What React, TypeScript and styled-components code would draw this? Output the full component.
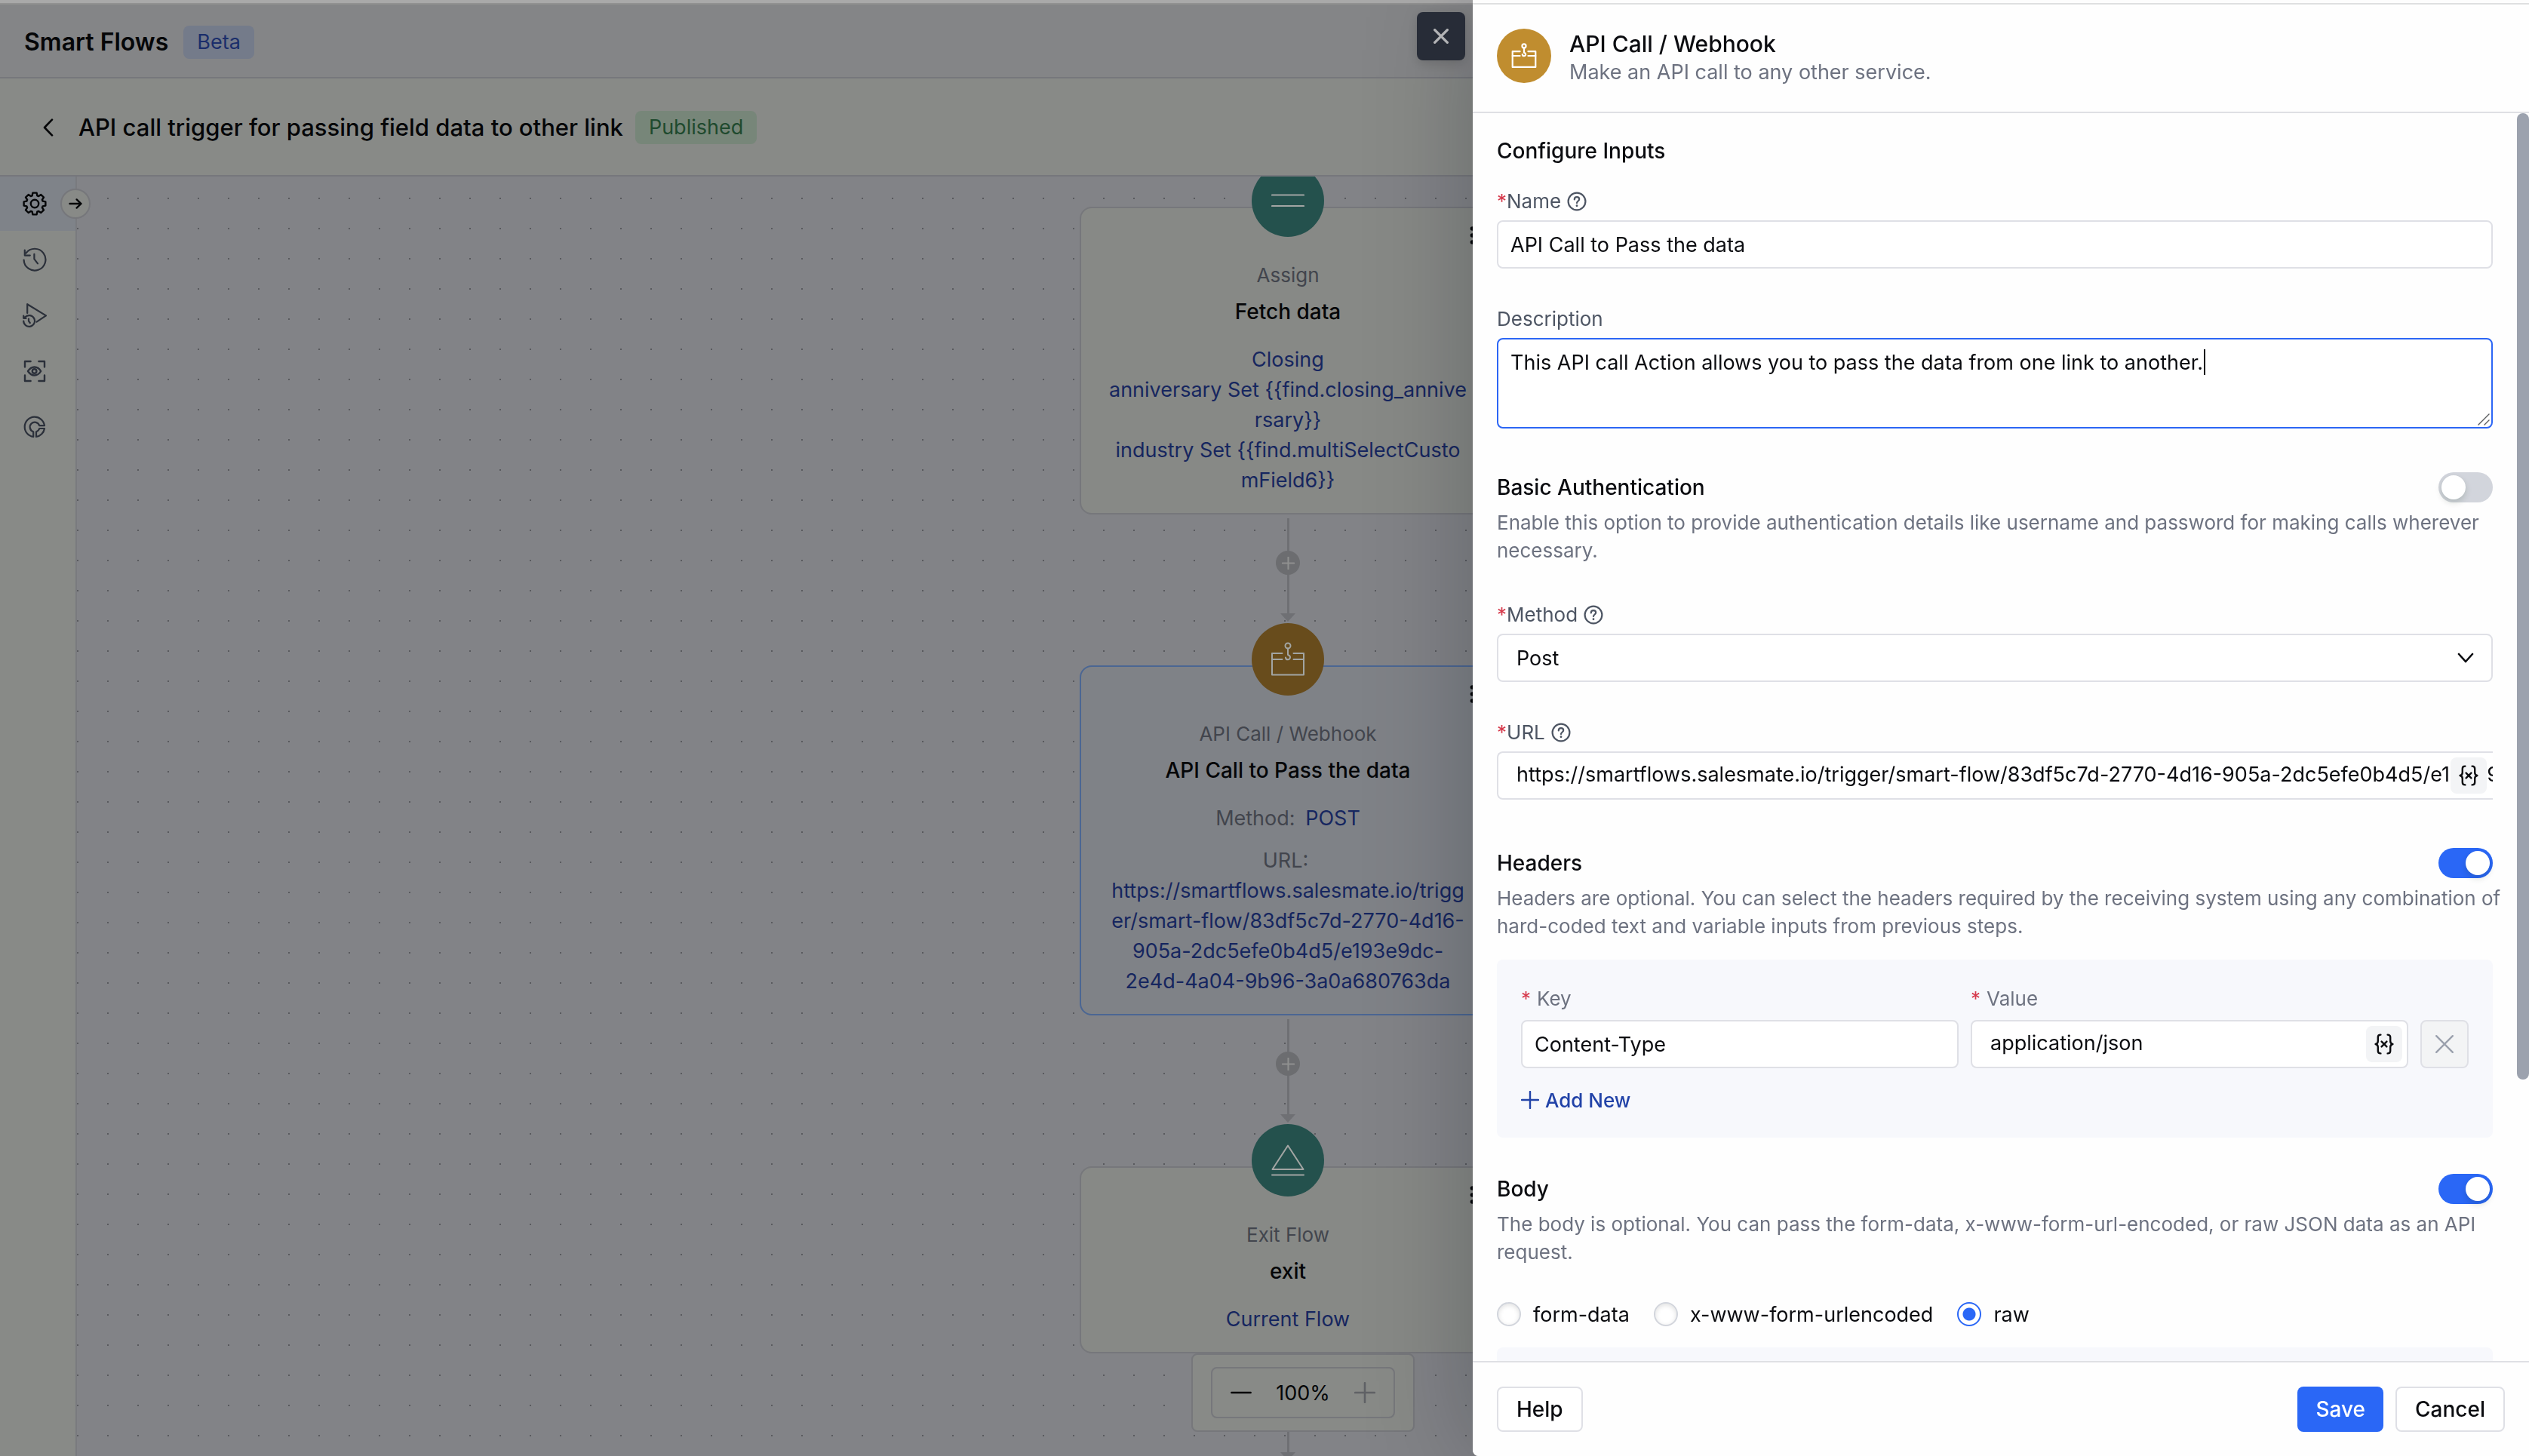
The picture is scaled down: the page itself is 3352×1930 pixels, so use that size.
import React, { useId, useState } from "react";
import styled, { createGlobalStyle, css } from "styled-components";

const font = `Inter, "Liberation Sans", sans-serif`;

const GlobalStyle = createGlobalStyle`
  *, *::before, *::after { box-sizing: border-box; }
  html, body, #root { height: 100%; }
  body {
    margin: 0;
    overflow: hidden;
    font-family: ${font};
    font-size: 26px;
    color: #0b0c10;
    background: #828387;
  }
  button, input, select, textarea { font: inherit; color: inherit; margin: 0; }
  button { cursor: pointer; }
  h1, h2, h3, p { margin: 0; font-weight: inherit; font-size: inherit; }
  svg { display: block; flex: none; }
`;

/* ---------- dimmed workspace ---------- */

const Workspace = styled.div`
  height: 100vh;
  display: flex;
  flex-direction: column;
  color: #050608;
`;

const TopStrip = styled.div<{ $dim?: boolean }>`
  flex: none;
  height: 6px;
  background: ${(p) => (p.$dim ? "#a9a9a9" : "#fdfdfd")};
  border-bottom: 2px solid ${(p) => (p.$dim ? "#919191" : "#dfe0e1")};
`;

const AppHeader = styled.header`
  flex: none;
  height: 98px;
  display: flex;
  align-items: center;
  gap: 20px;
  padding: 4px 32px 0;
  background: #848587;
  border-bottom: 2px solid #76777c;
`;

const AppName = styled.h1`
  font-size: 32px;
  font-weight: 600;
  line-height: 40px;
`;

const Tag = styled.span<{ $tone: "blue" | "green" }>`
  height: 44px;
  padding: 0 18px;
  border-radius: 8px;
  font-size: 27px;
  line-height: 44px;
  ${(p) =>
    p.$tone === "blue"
      ? css`
          color: #1b2e6b;
          background: #747b8a;
        `
      : css`
          color: #1f4a2e;
          background: #778679;
        `}
`;

const FlowHeader = styled.div`
  flex: none;
  height: 130px;
  display: flex;
  align-items: center;
  gap: 16px;
  padding: 2px 48px 0;
  background: #888a87;
  border-bottom: 2px solid #76777c;
`;

const BackButton = styled.button`
  display: flex;
  align-items: center;
  justify-content: center;
  width: 32px;
  height: 40px;
  margin-right: 8px;
  padding: 0;
  border: 0;
  background: none;
`;

const FlowTitle = styled.h2`
  font-size: 31px;
  font-weight: 500;
  line-height: 40px;
`;

const WorkArea = styled.div`
  flex: 1;
  min-height: 0;
  display: flex;
`;

const SideNav = styled.nav`
  position: relative;
  z-index: 1;
  flex: none;
  width: 102px;
  display: flex;
  flex-direction: column;
  gap: 2px;
  background: #888a87;
  border-right: 2px solid #797a7e;
`;

const NavItem = styled.button<{ $active?: boolean }>`
  display: flex;
  align-items: center;
  height: 72px;
  padding: 0 30px;
  border: 0;
  color: ${(p) => (p.$active ? "#050608" : "#2b303a")};
  background: ${(p) => (p.$active ? "#7f8389" : "transparent")};
`;

const ExpandButton = styled.button`
  position: absolute;
  top: 16px;
  right: -20px;
  width: 40px;
  height: 40px;
  display: flex;
  align-items: center;
  justify-content: center;
  padding: 0;
  border: 2px solid #76777b;
  border-radius: 50%;
  background: #888a87;
`;

const Canvas = styled.main`
  position: relative;
  flex: 1;
  min-width: 0;
  overflow: hidden;
  display: flex;
  flex-direction: column;
  align-items: center;
  padding: 40px 40px 0 0;
  background-color: #828387;
  background-image: conic-gradient(from 0deg at 2px 2px, transparent 75%, #595a5e 0);
  background-size: 40px 40px;
  background-position: 0 28px;
`;

const NodeCard = styled.section<{ $selected?: boolean }>`
  position: relative;
  flex: none;
  width: 552px;
  display: flex;
  flex-direction: column;
  align-items: center;
  padding: 69px 34px 23px;
  border: 2px solid ${(p) => (p.$selected ? "#4b6693" : "#76777b")};
  border-radius: 16px;
  background: ${(p) => (p.$selected ? "#7f8287" : "#878986")};
  text-align: center;
`;

const NodeBadge = styled.div<{ $tone: "teal" | "amber" }>`
  position: absolute;
  top: -58px;
  left: 50%;
  width: 96px;
  height: 96px;
  margin-left: -48px;
  display: flex;
  align-items: center;
  justify-content: center;
  border-radius: 50%;
  color: #a2a5a3;
  background: ${(p) => (p.$tone === "teal" ? "#24514d" : "#684c1c")};
`;

const NodeMenu = styled.button`
  position: absolute;
  top: 22px;
  right: 16px;
  width: 28px;
  height: 28px;
  padding: 0;
  border: 0;
  background: none;
`;

const NodeKind = styled.p`
  font-size: 26px;
  line-height: 40px;
  color: #42454d;
`;

const NodeName = styled.h3`
  margin-top: 8px;
  font-size: 28px;
  font-weight: 500;
  line-height: 40px;
`;

const NodeText = styled.div<{ $gap?: number }>`
  margin-top: ${(p) => p.$gap ?? 24}px;
  font-size: 27px;
  line-height: 40px;
  white-space: nowrap;
  color: #16265f;
`;

const Muted = styled.span`
  padding-right: 6px;
  color: #42454d;
`;

const Connector = styled.div`
  flex: none;
  display: flex;
  flex-direction: column;
  align-items: center;
  height: 200px;
  padding: 5px 0;
  color: #6f7074;
`;

const Stem = styled.div<{ $long?: boolean }>`
  width: 3px;
  height: ${(p) => (p.$long ? 51 : 43)}px;
  background: currentColor;
`;

const AddStep = styled.button`
  width: 32px;
  height: 32px;
  display: flex;
  align-items: center;
  justify-content: center;
  padding: 0;
  border: 0;
  border-radius: 50%;
  color: #8f908f;
  background: #6c6d70;
`;

const ZoomBox = styled.div`
  position: absolute;
  left: 50%;
  bottom: 32px;
  transform: translateX(-50%);
  padding: 16px 24px;
  border: 2px solid #76777b;
  border-radius: 8px;
  background: #888a87;
`;

const ZoomInner = styled.div`
  display: flex;
  align-items: center;
  justify-content: space-between;
  width: 244px;
  height: 68px;
  padding: 0 24px;
  border: 2px solid #76777b;
  border-radius: 8px;
  font-size: 27px;
`;

const IconButton = styled.button<{ $faint?: boolean }>`
  display: flex;
  align-items: center;
  justify-content: center;
  padding: 0;
  border: 0;
  background: none;
  color: ${(p) => (p.$faint ? "#606266" : "#050608")};
`;

/* ---------- drawer ---------- */

const Drawer = styled.aside`
  position: fixed;
  top: 0;
  right: 0;
  bottom: 0;
  width: min(1400px, 100%);
  display: flex;
  flex-direction: column;
  background: #fefefe;
  border-bottom-left-radius: 8px;
  box-shadow: 0 0 140px rgba(8, 12, 24, 0.26);
`;

const CloseButton = styled.button`
  position: absolute;
  top: 16px;
  left: -74px;
  width: 64px;
  height: 64px;
  display: flex;
  align-items: center;
  justify-content: center;
  padding: 0;
  border: 0;
  border-radius: 8px;
  color: #b2b3b5;
  background: #272c37;
  box-shadow: 0 4px 16px rgba(0, 0, 0, 0.15);
`;

const DrawerHeader = styled.header`
  flex: none;
  display: flex;
  align-items: flex-start;
  gap: 24px;
  height: 144px;
  padding: 32px;
  border-bottom: 2px solid #dfe0e4;
`;

const DrawerBadge = styled.div`
  width: 72px;
  height: 72px;
  display: flex;
  align-items: center;
  justify-content: center;
  border-radius: 50%;
  color: #fff;
  background: #c08d2f;
`;

const DrawerTitle = styled.h2`
  font-size: 30px;
  font-weight: 500;
  line-height: 40px;
`;

const DrawerSubtitle = styled.p`
  font-size: 27px;
  line-height: 36px;
  color: #6d7280;
`;

const DrawerBody = styled.div`
  position: relative;
  flex: 1;
  min-height: 0;
  overflow: hidden;
  padding: 32px 48px 0 32px;
`;

const ScrollThumb = styled.div`
  position: absolute;
  top: 0;
  right: 0;
  width: 16px;
  height: 1281px;
  border-radius: 8px;
  background: #9ca2ae;
`;

const SectionTitle = styled.h3`
  font-size: 28px;
  font-weight: 500;
  line-height: 36px;
`;

const Field = styled.div<{ $gap: number }>`
  display: flex;
  flex-direction: column;
  margin-top: ${(p) => p.$gap}px;
`;

const LabelRow = styled.div`
  display: flex;
  align-items: center;
  gap: 8px;
  height: 36px;
  margin-bottom: 7px;
  color: #4d5563;
`;

const Label = styled.label`
  font-size: 26px;
  line-height: 36px;
`;

const Star = styled.span`
  color: #d63a4c;
`;

const control = css`
  display: block;
  width: 100%;
  border: 2px solid #dfe0e6;
  border-radius: 8px;
  background: #fff;
  font-size: 27px;
  outline: none;
`;

const TextInput = styled.input<{ $inset?: boolean; $open?: boolean }>`
  ${control}
  height: 64px;
  padding: 0 16px;
  ${(p) => p.$inset && "padding: 0 16px 4px 24px;"}
  ${(p) => p.$open && "padding-right: 0; border-right: 0; border-radius: 8px 0 0 8px;"}
`;

const TextArea = styled.textarea`
  ${control}
  height: 120px;
  padding: 11px 16px;
  line-height: 40px;
  border-color: #2c66f5;
  resize: none;
`;

const SelectBox = styled.select`
  ${control}
  height: 64px;
  padding: 0 24px;
  appearance: none;
`;

const ControlWrap = styled.div`
  position: relative;
`;

const SelectArrow = styled.span`
  position: absolute;
  top: 20px;
  right: 24px;
  pointer-events: none;
`;

const Caret = styled.span`
  position: absolute;
  top: 15px;
  left: 937px;
  width: 2px;
  height: 34px;
  background: #0b0c10;
`;

const Grip = styled.span`
  position: absolute;
  right: 4px;
  bottom: 4px;
`;

const VariableButton = styled.button`
  position: absolute;
  top: 8px;
  right: 8px;
  width: 48px;
  height: 48px;
  display: flex;
  align-items: center;
  justify-content: center;
  padding: 0;
  border: 0;
  border-radius: 8px;
  background: #f3f4f6;
`;

const ToggleSection = styled.section<{ $gap: number }>`
  margin-top: ${(p) => p.$gap}px;
`;

const ToggleRow = styled.div`
  display: flex;
  align-items: center;
  justify-content: space-between;
  height: 40px;
  margin-bottom: 8px;
`;

const ToggleLabel = styled.label`
  font-size: 28px;
  font-weight: 500;
  line-height: 40px;
`;

const Switch = styled.input`
  appearance: none;
  width: 72px;
  height: 40px;
  border-radius: 20px;
  background: #d2d5dc;

  &::before {
    content: "";
    display: block;
    width: 32px;
    height: 32px;
    margin: 4px;
    border-radius: 50%;
    background: #fff;
    box-shadow: 0 4px 8px rgba(0, 35, 11, 0.16);
  }
  &:checked {
    background: #2a67f6;
  }
  &:checked::before {
    margin-left: 36px;
  }
`;

const Hint = styled.p`
  margin-right: -16px;
  font-size: 26px;
  line-height: 37px;
  color: #6d7280;
`;

const Panel = styled.div`
  display: flex;
  flex-direction: column;
  gap: 24px;
  margin-top: 26px;
  padding: 32px;
  border-radius: 8px;
  background: #f7f8fc;
`;

const HeaderRow = styled.div`
  display: flex;
  align-items: flex-end;
  gap: 16px;
`;

const Cell = styled.div`
  flex: 1;
  min-width: 0;
`;

const CellLabel = styled.label`
  display: flex;
  gap: 8px;
  margin-bottom: 8px;
  font-size: 26px;
  line-height: 40px;
  color: #6d7280;
`;

const RemoveButton = styled.button`
  width: 64px;
  height: 64px;
  display: flex;
  align-items: center;
  justify-content: center;
  padding: 0;
  border: 2px solid #dfe0e6;
  border-radius: 8px;
  color: #9ba1ad;
  background: #f3f4f5;
`;

const AddNew = styled.button`
  align-self: flex-start;
  display: flex;
  align-items: center;
  gap: 8px;
  height: 36px;
  padding: 0;
  border: 0;
  background: none;
  font-size: 26px;
  font-weight: 500;
  color: #2243a8;
`;

const RadioRow = styled.div`
  display: flex;
  align-items: center;
  gap: 32px;
  height: 40px;
  margin-top: 44px;
`;

const RadioLabel = styled.label`
  display: flex;
  align-items: center;
  gap: 16px;
  font-size: 27px;
`;

const Radio = styled.input`
  appearance: none;
  width: 32px;
  height: 32px;
  border: 2px solid #d2d5dc;
  border-radius: 50%;
  background: #fff;
  box-shadow: inset 0 2px 6px rgba(0, 0, 0, 0.12);

  &:checked {
    border-color: #2a67f6;
    background: radial-gradient(circle, #2a67f6 0 8px, #fff 9px);
    box-shadow: none;
  }
`;

const RawPanel = styled.div`
  height: 200px;
  margin-top: 24px;
  border-radius: 8px;
  background: #f7f8fc;
`;

const DrawerFooter = styled.footer`
  flex: none;
  display: flex;
  gap: 16px;
  padding: 32px;
  border-top: 2px solid #dfe0e4;
  border-bottom-left-radius: 8px;
  background: #fefefe;
`;

const Spacer = styled.div`
  flex: 1;
`;

const Button = styled.button<{ $primary?: boolean }>`
  height: 60px;
  padding: 0 24px;
  border: ${(p) => (p.$primary ? "0" : "2px solid #dfe0e6")};
  border-radius: 8px;
  font-size: 28px;
  font-weight: 500;
  color: ${(p) => (p.$primary ? "#fff" : "#0b0c10")};
  background: ${(p) => (p.$primary ? "#2a67f6" : "#fff")};
`;

/* ---------- icons ---------- */

const stroke = {
  fill: "none",
  stroke: "currentColor",
  strokeLinecap: "round" as const,
  strokeLinejoin: "round" as const,
};

/* Eight-toothed cog built from alternating tooth and valley points. */
const cogPath = (() => {
  const points: string[] = [];
  for (let i = 0; i < 8; i++) {
    const a = (i * Math.PI) / 4;
    const at = (offset: number, r: number) =>
      `${(16 + r * Math.sin(a + offset)).toFixed(2)} ${(16 - r * Math.cos(a + offset)).toFixed(2)}`;
    points.push(at(-0.3, 11.2), at(-0.18, 14.6), at(0.18, 14.6), at(0.3, 11.2));
  }
  return `M${points.join("L")}z`;
})();

const GearIcon = () => (
  <svg width="32" height="32" viewBox="0 0 32 32" {...stroke} strokeWidth="2.4">
    <path d={cogPath} />
    <circle cx="16" cy="16" r="5.2" />
  </svg>
);

const HistoryIcon = () => (
  <svg width="32" height="32" viewBox="0 0 32 32" {...stroke} strokeWidth="2.2">
    <path d="M1.6 16.5A14.4 14.4 0 1 0 4.4 7.6" />
    <path d="M2.8 3.6v7h7" />
    <path d="M15.4 8.8v6.6l4.6 6" />
  </svg>
);

const ReplayIcon = () => (
  <svg width="32" height="32" viewBox="0 0 32 32" {...stroke} strokeWidth="2.2">
    <path d="M6.2 13V1.2L31 16.4 18.6 24.6" />
    <path d="M1.2 23.6a7.4 7.4 0 1 0 2.4-5.6l-2 1.2" />
    <path d="M1.2 16.6v3.2h3.4M8 20.6v3l1.8 2.4" />
  </svg>
);

const FocusEyeIcon = () => (
  <svg width="32" height="32" viewBox="0 0 32 32" {...stroke} strokeWidth="2.4">
    <path d="M3 10.4V3h7.6M21.4 3H29v7.4M29 21.4V29h-7.6M10.6 29H3v-7.6" />
    <path d="M7 16c2.4-3.7 5.2-5.5 8.600-5.500S22 12.300 24.200 16c-2.200 3.700-5.200 5.500-8.600 5.500S9.400 19.700 7 16z" />
    <circle cx="15.6" cy="16" r="2.8" />
  </svg>
);

const GoalIcon = () => (
  <svg width="32" height="32" viewBox="0 0 32 32" {...stroke} strokeWidth="2.2">
    <path d="M29 14.2A13.2 13.2 0 1 0 14.2 29v-6.800A6.400 6.400 0 1 1 22.200 14.200z" />
    <path d="M29 18A13.2 13.2 0 0 1 18 29v-6.800A6.400 6.400 0 0 0 22.200 18z" />
  </svg>
);

const ArrowRightIcon = () => (
  <svg width="20" height="20" viewBox="0 0 20 20" {...stroke} strokeWidth="2.4">
    <path d="M2.500 10h15M11.600 4.400 17.500 10l-5.900 5.600" />
  </svg>
);

const ChevronLeftIcon = () => (
  <svg width="14" height="24" viewBox="0 0 14 24" {...stroke} strokeWidth="2.6">
    <path d="M12 1.6 2 12l10 10.4" />
  </svg>
);

const ChevronDownIcon = () => (
  <svg width="24" height="24" viewBox="0 0 24 24" {...stroke} strokeWidth="2.6">
    <path d="m3 7 9 10 9-10" />
  </svg>
);

const CrossIcon = ({ size, weight }: { size: number; weight: number }) => (
  <svg width={size} height={size} viewBox="0 0 24 24" {...stroke} strokeWidth={weight}>
    <path d="m2 2 20 20M22 2 2 22" />
  </svg>
);

const PlusIcon = ({ size, weight }: { size: number; weight: number }) => (
  <svg width={size} height={size} viewBox="0 0 24 24" {...stroke} strokeWidth={weight}>
    <path d="M12 1v22M1 12h22" />
  </svg>
);

const MinusIcon = () => (
  <svg width="28" height="28" viewBox="0 0 28 28" {...stroke} strokeWidth="2.6">
    <path d="M1.400 14h25.200" />
  </svg>
);

const WebhookIcon = ({ size, weight }: { size: number; weight: number }) => (
  <svg width={size} height={size} viewBox="0 0 44 44" {...stroke} strokeWidth={weight} overflow="visible">
    <path d="M14.500 14H1v28.500h42V14H29.500" />
    <path d="M1 22h13.500M29.500 22H43" />
    <circle cx="22" cy="4" r="3.500" />
    <path d="M22 7.500V16c2 .8 3 2 3 3.200a3 3 0 0 1-6 .2" />
  </svg>
);

const EqualsIcon = () => (
  <svg width="44" height="44" viewBox="0 0 44 44" {...stroke} strokeWidth="2.2">
    <path d="M1 14.500h42M1 29h42" />
  </svg>
);

const EjectIcon = () => (
  <svg width="44" height="44" viewBox="0 0 44 44" {...stroke} strokeWidth="2">
    <path d="M22 2.500 42.500 34h-41zM1 41.500h42" />
  </svg>
);

const HelpIcon = () => (
  <svg width="26" height="26" viewBox="0 0 26 26" {...stroke} strokeWidth="2.2">
    <circle cx="13" cy="13" r="11.4" />
    <path d="M9.800 10.400c0-2 1.400-3.200 3.200-3.200s3.200 1.200 3.200 2.900c0 2.300-3.200 2.500-3.200 5" />
    <path d="M13 18.700v.1" strokeWidth="2.8" />
  </svg>
);

const VariableIcon = () => (
  <svg width="26" height="28" viewBox="0 0 26 28" {...stroke} strokeWidth="2.4">
    <path d="M8.400 1.600c-2.800 0-3.600 1-3.600 3.400v5c0 2.400-1 3.600-3.200 4 2.200.4 3.200 1.600 3.200 4v5c0 2.400.8 3.400 3.600 3.400" />
    <path d="M17.600 1.600c2.800 0 3.600 1 3.600 3.400v5c0 2.400 1 3.600 3.200 4-2.200.4-3.200 1.600-3.200 4v5c0 2.400-.8 3.400-3.600 3.400" />
    <path d="m9.600 10.600 6.800 6.800M16.400 10.600l-6.800 6.800" />
  </svg>
);

const MoreIcon = () => (
  <svg width="28" height="28" viewBox="0 0 28 28" fill="currentColor">
    <circle cx="14.500" cy="5" r="2.800" />
    <circle cx="14.500" cy="14" r="2.800" />
    <circle cx="14.500" cy="23" r="2.800" />
  </svg>
);

const ArrowHead = () => (
  <svg width="20" height="12" viewBox="0 0 20 12" fill="currentColor">
    <path d="M0 0h20L10 11z" />
  </svg>
);

const GripIcon = () => (
  <svg width="16" height="16" viewBox="0 0 16 16" {...stroke} strokeWidth="1.4" color="#5b5c60">
    <path d="M1 15 15 1M9 15l6-6" />
  </svg>
);

/* ---------- parts ---------- */

type NodeProps = {
  kind: string;
  name: string;
  tone: "teal" | "amber";
  icon: React.ReactNode;
  selected?: boolean;
  children: React.ReactNode;
};

const FlowNode = ({ kind, name, tone, icon, selected, children }: NodeProps) => (
  <NodeCard $selected={selected}>
    <NodeBadge $tone={tone}>{icon}</NodeBadge>
    <NodeMenu type="button" aria-label={`${name} options`}>
      <MoreIcon />
    </NodeMenu>
    <NodeKind>{kind}</NodeKind>
    <NodeName>{name}</NodeName>
    {children}
  </NodeCard>
);

const Link = () => (
  <Connector>
    <Stem />
    <AddStep type="button" aria-label="Add step">
      <PlusIcon size={17} weight={3} />
    </AddStep>
    <Stem $long />
    <ArrowHead />
  </Connector>
);

const FieldLabel = ({ id, text, required, help }: { id: string; text: string; required?: boolean; help?: boolean }) => (
  <LabelRow>
    <Label htmlFor={id}>
      {required && <Star>*</Star>}
      {text}
    </Label>
    {help && <HelpIcon />}
  </LabelRow>
);

const ToggleBlock = ({
  title,
  hint,
  gap,
  initial,
  children,
}: {
  title: string;
  hint: string;
  gap: number;
  initial: boolean;
  children?: React.ReactNode;
}) => {
  const id = useId();
  const [on, setOn] = useState(initial);
  return (
    <ToggleSection $gap={gap}>
      <ToggleRow>
        <ToggleLabel htmlFor={id}>{title}</ToggleLabel>
        <Switch id={id} type="checkbox" role="switch" checked={on} onChange={(e) => setOn(e.target.checked)} />
      </ToggleRow>
      <Hint>{hint}</Hint>
      {on && children}
    </ToggleSection>
  );
};

const bodyTypes = ["form-data", "x-www-form-urlencoded", "raw"];

export default function App() {
  const [bodyType, setBodyType] = useState("raw");
  return (
    <>
      <GlobalStyle />
      <Workspace>
        <TopStrip $dim />
        <AppHeader>
          <AppName>Smart Flows</AppName>
          <Tag $tone="blue">Beta</Tag>
        </AppHeader>
        <FlowHeader>
          <BackButton type="button" aria-label="Back">
            <ChevronLeftIcon />
          </BackButton>
          <FlowTitle>API call trigger for passing field data to other link</FlowTitle>
          <Tag $tone="green">Published</Tag>
        </FlowHeader>
        <WorkArea>
          <SideNav>
            <NavItem type="button" aria-label="Settings" $active>
              <GearIcon />
            </NavItem>
            <NavItem type="button" aria-label="History">
              <HistoryIcon />
            </NavItem>
            <NavItem type="button" aria-label="Run logs">
              <ReplayIcon />
            </NavItem>
            <NavItem type="button" aria-label="Preview">
              <FocusEyeIcon />
            </NavItem>
            <NavItem type="button" aria-label="Goals">
              <GoalIcon />
            </NavItem>
            <ExpandButton type="button" aria-label="Expand menu">
              <ArrowRightIcon />
            </ExpandButton>
          </SideNav>
          <Canvas>
            <FlowNode kind="Assign" name="Fetch data" tone="teal" icon={<EqualsIcon />}>
              <NodeText>
                Closing
                <br />
                anniversary Set {"{{find.closing_annive"}
                <br />
                {"rsary}}"}
                <br />
                industry Set {"{{find.multiSelectCusto"}
                <br />
                {"mField6}}"}
              </NodeText>
            </FlowNode>
            <Link />
            <FlowNode
              kind="API Call / Webhook"
              name="API Call to Pass the data"
              tone="amber"
              icon={<WebhookIcon size={44} weight={2} />}
              selected
            >
              <NodeText>
                <Muted>Method:</Muted> POST
              </NodeText>
              <NodeText $gap={16}>
                <Muted>URL:</Muted>
                <br />
                https://smartflows.salesmate.io/trigg
                <br />
                er/smart-flow/83df5c7d-2770-4d16-
                <br />
                905a-2dc5efe0b4d5/e193e9dc-
                <br />
                2e4d-4a04-9b96-3a0a680763da
              </NodeText>
            </FlowNode>
            <Link />
            <FlowNode kind="Exit Flow" name="exit" tone="teal" icon={<EjectIcon />}>
              <NodeText>Current Flow</NodeText>
            </FlowNode>
            <Link />
            <ZoomBox>
              <ZoomInner>
                <IconButton type="button" aria-label="Zoom out">
                  <MinusIcon />
                </IconButton>
                100%
                <IconButton type="button" aria-label="Zoom in" $faint>
                  <PlusIcon size={28} weight={2.2} />
                </IconButton>
              </ZoomInner>
            </ZoomBox>
          </Canvas>
        </WorkArea>
      </Workspace>

      <Drawer>
        <CloseButton type="button" aria-label="Close">
          <CrossIcon size={20} weight={4} />
        </CloseButton>
        <TopStrip />
        <DrawerHeader>
          <DrawerBadge>
            <WebhookIcon size={32} weight={3} />
          </DrawerBadge>
          <div>
            <DrawerTitle>API Call / Webhook</DrawerTitle>
            <DrawerSubtitle>Make an API call to any other service.</DrawerSubtitle>
          </div>
        </DrawerHeader>
        <DrawerBody>
          <ScrollThumb />
          <SectionTitle>Configure Inputs</SectionTitle>
          <Field $gap={31}>
            <FieldLabel id="name" text="Name" required help />
            <TextInput id="name" defaultValue="API Call to Pass the data" />
          </Field>
          <Field $gap={49}>
            <FieldLabel id="description" text="Description" />
            <ControlWrap>
              <TextArea
                id="description"
                defaultValue="This API call Action allows you to pass the data from one link to another."
              />
              <Caret />
              <Grip>
                <GripIcon />
              </Grip>
            </ControlWrap>
          </Field>
          <ToggleBlock
            title="Basic Authentication"
            hint="Enable this option to provide authentication details like username and password for making calls wherever necessary."
            gap={58}
            initial={false}
          />
          <Field $gap={49}>
            <FieldLabel id="method" text="Method" required help />
            <ControlWrap>
              <SelectBox id="method" defaultValue="Post">
                <option>Post</option>
                <option>Get</option>
                <option>Put</option>
              </SelectBox>
              <SelectArrow>
                <ChevronDownIcon />
              </SelectArrow>
            </ControlWrap>
          </Field>
          <Field $gap={49}>
            <FieldLabel id="url" text="URL" required help />
            <ControlWrap>
              <TextInput
                id="url"
                $inset
                $open
                defaultValue="https://smartflows.salesmate.io/trigger/smart-flow/83df5c7d-2770-4d16-905a-2dc5efe0b4d5/e193e9dc-2e4d-4a04-9b96-3a0a680763da"
              />
              <VariableButton type="button" aria-label="Insert variable">
                <VariableIcon />
              </VariableButton>
            </ControlWrap>
          </Field>
          <ToggleBlock
            title="Headers"
            hint="Headers are optional. You can select the headers required by the receiving system using any combination of hard-coded text and variable inputs from previous steps."
            gap={64}
            initial
          >
            <Panel>
              <HeaderRow>
                <Cell>
                  <CellLabel htmlFor="key">
                    <Star>*</Star>Key
                  </CellLabel>
                  <TextInput id="key" defaultValue="Content-Type" />
                </Cell>
                <Cell>
                  <CellLabel htmlFor="value">
                    <Star>*</Star>Value
                  </CellLabel>
                  <ControlWrap>
                    <TextInput id="value" $inset defaultValue="application/json" />
                    <VariableButton type="button" aria-label="Insert variable">
                      <VariableIcon />
                    </VariableButton>
                  </ControlWrap>
                </Cell>
                <RemoveButton type="button" aria-label="Remove header">
                  <CrossIcon size={26} weight={2.2} />
                </RemoveButton>
              </HeaderRow>
              <AddNew type="button">
                <PlusIcon size={24} weight={2.4} />
                Add New
              </AddNew>
            </Panel>
          </ToggleBlock>
          <ToggleBlock
            title="Body"
            hint="The body is optional. You can pass the form-data, x-www-form-url-encoded, or raw JSON data as an API request."
            gap={48}
            initial
          >
            <RadioRow>
              {bodyTypes.map((type) => (
                <RadioLabel key={type}>
                  <Radio
                    type="radio"
                    name="body-type"
                    checked={bodyType === type}
                    onChange={() => setBodyType(type)}
                  />
                  {type}
                </RadioLabel>
              ))}
            </RadioRow>
            <RawPanel />
          </ToggleBlock>
        </DrawerBody>
        <DrawerFooter>
          <Button type="button">Help</Button>
          <Spacer />
          <Button type="button" $primary>
            Save
          </Button>
          <Button type="button">Cancel</Button>
        </DrawerFooter>
      </Drawer>
    </>
  );
}
